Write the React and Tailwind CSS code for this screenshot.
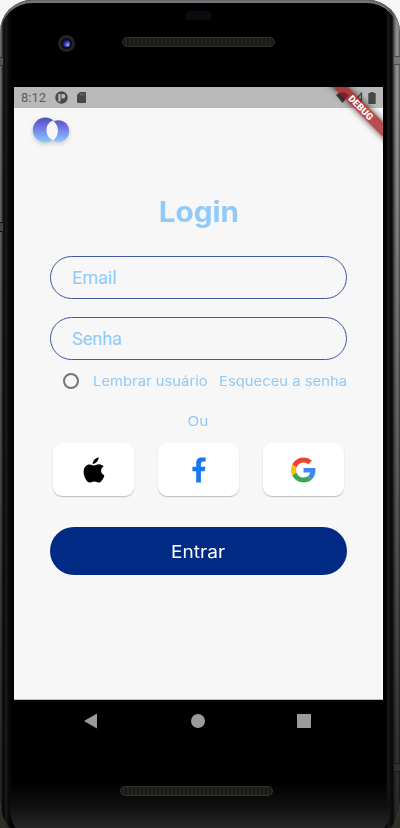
import React from "react";

const SANS = "font-[Inter,'Liberation_Sans',sans-serif]";
const ROBOTO = "font-[Roboto,'Liberation_Sans',sans-serif]";

function Speaker({ className }) {
  return (
    <div className={`h-[10px] w-[153px] rounded-full border border-[#34322f] bg-[repeating-linear-gradient(90deg,#1b1917_0px,#1b1917_2px,#25221f_2px,#25221f_4px)] ${className}`} />
  );
}

function StatusBar() {
  return (
    <div className="flex h-[21px] items-center bg-[#b9b9b9] pl-[7px] pr-[7px] text-[#484848]">
      <span className={`w-[34px] text-[13px] leading-none text-[#5c5c5c] ${ROBOTO}`}>8:12</span>
      <svg width="13" height="13" viewBox="0 0 13 13">
        <circle cx="6.5" cy="6.5" r="6.2" fill="#484848" />
        <path d="M3.3 3h2.200v7.500H3.300zM6.600 3h1.500a2.200 2.200 0 0 1 0 4.500H6.600z" fill="#b9b9b9" />
      </svg>
      <svg className="ml-[9px]" width="9" height="11" viewBox="0 0 9 11">
        <path d="M3 0h5q1 0 1 1v9q0 1-1 1H1q-1 0-1-1V3z" fill="#484848" />
        <path d="M3.5 1.4v2M5.3 1.4v2M7.1 1.4v2" stroke="#888" strokeWidth=".7" />
      </svg>
      <svg className="ml-auto" width="13" height="11" viewBox="0 0 13 11">
        <path d="M0 3Q6.5-2.5 13 3L6.5 11z" fill="#3c3c3c" />
      </svg>
      <svg className="ml-[4px]" width="10" height="12" viewBox="0 0 10 12">
        <path d="M8.5 1v9H1z" fill="none" stroke="#484848" strokeWidth="1.2" />
        <path d="m5 6 4 4m0-4-4 4" stroke="#484848" />
      </svg>
      <svg className="ml-[5px]" width="8" height="12" viewBox="0 0 8 12">
        <path d="M2.5 0h3v1H7q.7 0 .7.7v9.6q0 .7-.7.7H1q-.7 0-.7-.7V1.700Q.3 1 1 1h1.500z" fill="#484848" />
      </svg>
    </div>
  );
}

function Logo() {
  return (
    <svg className="ml-[17px] mt-[7px] block overflow-visible drop-shadow-[0_2px_2px_rgba(0,0,0,0.18)]" width="40" height="30" viewBox="0 0 40 30">
      <defs>
        <linearGradient id="logo" x1="0" y1="2" x2="0" y2="28" gradientUnits="userSpaceOnUse">
          <stop stopColor="#4650b9" />
          <stop offset=".38" stopColor="#7270e2" />
          <stop offset="1" stopColor="#88d2ff" />
        </linearGradient>
      </defs>
      <circle cx="14.300" cy="15" r="12.500" fill="url(#logo)" />
      <circle cx="27.300" cy="16" r="10.800" fill="url(#logo)" />
      <path d="M21.800 5.500A12.500 12.500 0 0 1 22.300 25.400 10.800 10.800 0 0 1 21.800 5.500z" fill="#f5f5fa" />
    </svg>
  );
}

function Field({ label }) {
  return (
    <input
      aria-label={label}
      placeholder={label}
      className={`block h-[43px] w-full rounded-full border border-[#3f589f] bg-transparent pl-[21px] text-[18px] text-[#90caf9] outline-none placeholder:text-[#90caf9] ${ROBOTO}`}
    />
  );
}

function SocialButton({ label, children }) {
  return (
    <button aria-label={label} className="flex h-[53px] w-[81px] items-center justify-center rounded-[9px] bg-white shadow-[0_1px_1px_rgba(0,0,0,0.18),0_1px_2px_rgba(0,0,0,0.08)]">
      {children}
    </button>
  );
}

function Login() {
  return (
    <div className="flex flex-col px-9">
      <h1 className={`mt-[47px] text-center text-[28px] font-bold leading-[40px] text-[#90caf9] ${SANS}`}>
        <span className="inline-block scale-x-[1.06]">Login</span>
      </h1>
      <div className="mt-6 flex flex-col gap-[18px]">
        <Field label="Email" />
        <Field label="Senha" />
      </div>
      <div className={`mt-[10px] flex h-[22px] items-center whitespace-nowrap text-[13px] text-[#90caf9] ${SANS}`}>
        <span className="ml-[13px] h-4 w-4 shrink-0 rounded-full border-2 border-[#747474]" />
        <span className="ml-[14px] w-[126px] pt-[2px]">
          <span className="inline-block origin-left scale-x-[1.14]">Lembrar usuário</span>
        </span>
        <span className="inline-block origin-left scale-x-[1.14] pt-[2px]">Esqueceu a senha</span>
      </div>
      <div className={`mt-[18px] pr-[2px] text-center text-[13px] leading-[22px] text-[#90caf9] ${SANS}`}>
        <span className="inline-block scale-x-[1.18]">Ou</span>
      </div>
      <div className="mt-[11px] flex justify-between pl-[3px] pr-[3px]">
        <SocialButton label="Apple">
          <svg width="22" height="26" viewBox="0 0 22 26">
            <path d="M15.700.2c.2 2.500-2.800 6.900-6 6.800C9.400 4.200 12.300.9 15.700.2zM11.200 8.500c1.300 0 3-1.300 5.100-1.200 1.700.1 3.300.9 4.300 2.300-3.700 2.200-3.100 7.200.8 8.800-.9 2.700-3 7-5.300 7.100-1.700.1-2.500-1.100-4.700-1.100-2.200 0-3.100 1.100-4.700 1.100C3.600 25.400.6 19.100.6 15c0-5 3.100-7.600 6-7.600 1.900 0 3.400 1.100 4.600 1.100z" />
          </svg>
        </SocialButton>
        <SocialButton label="Facebook">
          <svg width="14" height="26" viewBox="0 0 14 26">
            <path d="M4.200 25.500V14.200H.4V9.800h3.800V6.200C4.200 2.400 6.200.4 9.700.4c1.600 0 3.900.2 3.900.2v4h-2.200c-2 0-2.500.9-2.500 2.300v2.900h4.500l-.7 4.400H8.900v11.300z" fill="#1877f2" />
          </svg>
        </SocialButton>
        <SocialButton label="Google">
          <svg width="25" height="26" viewBox="0 0 48 48">
            <path fill="#EA4335" d="M24 9.500c3.540 0 6.710 1.220 9.210 3.600l6.850-6.850C35.900 2.380 30.470 0 24 0 14.620 0 6.510 5.380 2.560 13.220l7.980 6.190C12.430 13.720 17.740 9.500 24 9.500z" />
            <path fill="#4285F4" d="M46.980 24.550c0-1.570-.15-3.090-.38-4.550H24v9.020h12.940c-.58 2.960-2.260 5.480-4.780 7.180l7.730 6c4.510-4.180 7.090-10.360 7.090-17.650z" />
            <path fill="#FBBC05" d="M10.530 28.590c-.48-1.450-.76-2.990-.76-4.590s.27-3.140.76-4.590l-7.980-6.190C.92 16.460 0 20.120 0 24c0 3.880.92 7.540 2.560 10.780l7.970-6.190z" />
            <path fill="#34A853" d="M24 48c6.480 0 11.930-2.130 15.890-5.810l-7.730-6c-2.150 1.450-4.920 2.300-8.160 2.300-6.260 0-11.570-4.220-13.470-9.910l-7.980 6.190C6.510 42.620 14.620 48 24 48z" />
          </svg>
        </SocialButton>
      </div>
      <button className={`mt-[31px] h-12 rounded-full bg-[#002a84] pt-[3px] text-[17px] text-white ${SANS}`}>
        <span className="inline-block scale-x-[1.12]">Entrar</span>
      </button>
    </div>
  );
}

export default function App() {
  return (
    <main className="relative h-[828px] w-[400px] overflow-hidden bg-[linear-gradient(#f6f6f6_0_800px,#2e2d28_806px)]">
      <div className="relative h-[842px] w-[400px] overflow-hidden rounded-t-[32px] rounded-b-[40px] bg-[linear-gradient(90deg,#777,#666_1px,#3a3a3a_2px,#090909_4px,#1c1c1c_6px,#0c0c0c_8px,#000_12px,#000_386px,#181818_388px,#090909_392px,#555_394px,#999_397px,#777_399px,#444_400px)] shadow-[inset_0_2px_1px_#686868]">
        <div className="pointer-events-none absolute left-0 top-[100px] h-[742px] w-[4px] bg-[linear-gradient(transparent,rgba(0,0,0,0.7))]" />
        <div className="pointer-events-none absolute right-0 top-[100px] h-[742px] w-[8px] bg-[linear-gradient(transparent,rgba(0,0,0,0.75))]" />
        <div className="pointer-events-none absolute left-[1px] top-[1px] h-[839px] w-[397px] rounded-t-[31px] rounded-b-[38px] border-t-2 border-[#77777b]" />
        <div className="flex h-[87px] items-start pt-[11px]">
          <div className="ml-[58px] mt-[24px] flex h-[17px] w-[17px] items-center justify-center rounded-full border-[3px] border-[#242426] bg-[#0b0c1c]">
            <span className="h-[7px] w-[7px] rounded-full bg-[radial-gradient(circle_at_70%_70%,#a9b6ff_0,#3b4fc5_35%,#171b58_70%)]" />
          </div>
          <Speaker className="ml-[47px] mt-[26px]" />
          <div className="-ml-[90px] h-[9px] w-[27px] rounded-full bg-[#090b11]" />
        </div>
        <section className="relative ml-[14px] h-[613px] w-[369px] overflow-hidden border-b border-[#bdbdbd] bg-[#f7f7f7]">
          <StatusBar />
          <Logo />
          <Login />
          <div className={`absolute -right-[23px] top-[15px] h-[11px] w-[90px] rotate-45 bg-[#a01418]/75 text-center text-[9.5px] font-black leading-[11px] text-white shadow-[0_0_6px_rgba(0,0,0,0.65)] ${ROBOTO}`}>DEBUG</div>
        </section>
        <nav className="flex h-[42px] items-center pl-[84px]">
          <svg width="13" height="16" viewBox="0 0 13 16"><path d="M0 8 13 .4v15.200z" fill="#9b9b9b" /></svg>
          <span className="ml-[94px] h-[14px] w-[14px] rounded-full bg-[#9b9b9b]" />
          <span className="ml-[92px] h-[14px] w-[14px] bg-[#9b9b9b]" />
        </nav>
        <div className="mx-[10px] h-[100px] rounded-b-[32px] bg-[linear-gradient(transparent_40%,#101010_65%,#2a2a2a_90%)] pl-[110px] pt-[44px]">
          <Speaker />
        </div>
      </div>
      <div className="absolute right-0 top-[56px] h-[9px] w-[6px] border-y border-[#4a4a4a] bg-[#777]" />
      <div className="absolute left-0 top-[57px] h-[9px] w-[3px] border-y border-[#333] bg-[#555]" />
      <div className="absolute left-0 top-[222px] h-[10px] w-[3px] border-y border-[#111] bg-[#444]" />
      <div className="absolute right-0 top-[763px] h-[9px] w-[6px] border-y border-[#191919] bg-[#303030]" />
    </main>
  );
}
